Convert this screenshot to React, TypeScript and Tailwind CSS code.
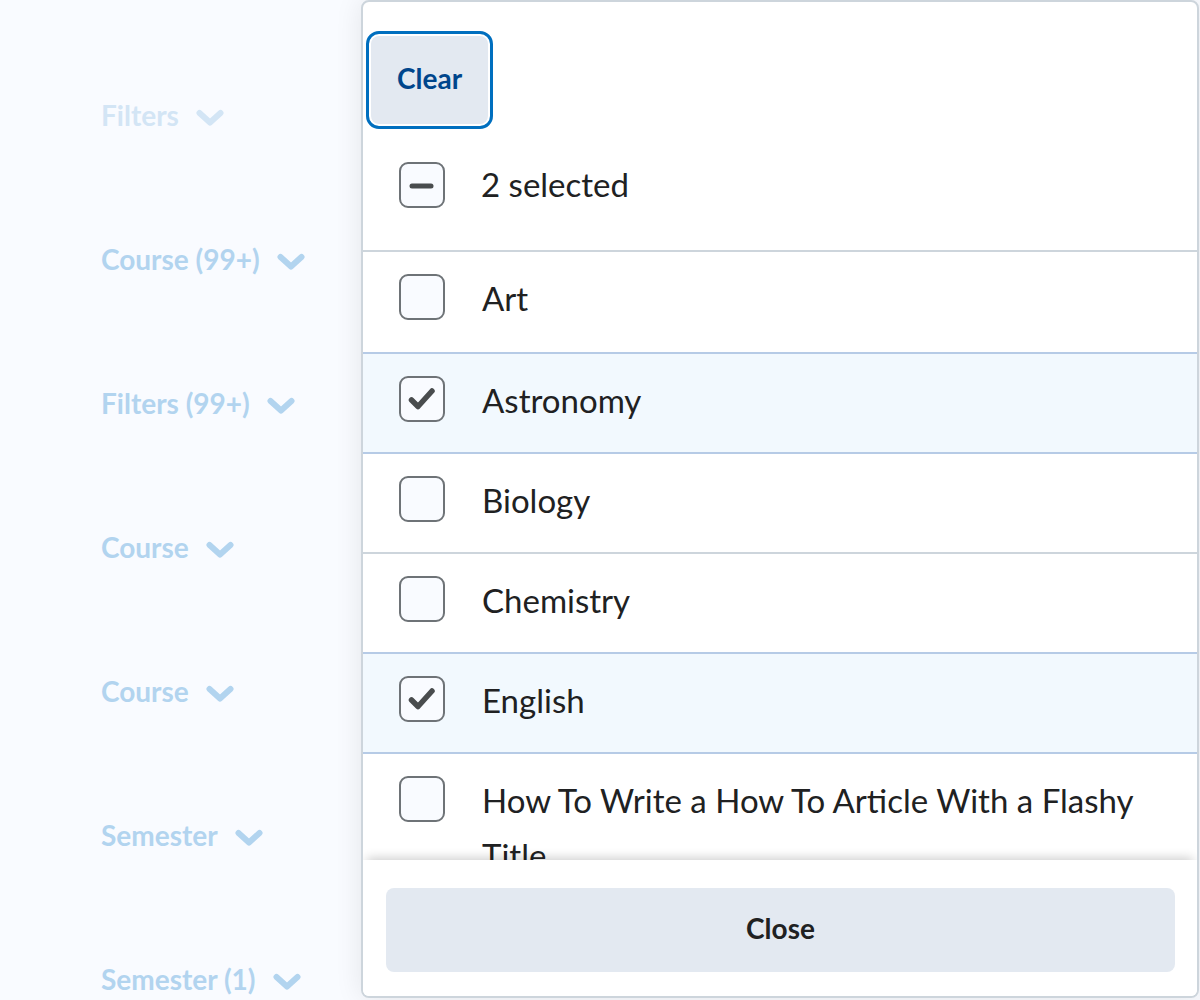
import type { ReactNode } from 'react';

type Course = { name: string; selected: boolean };

const filterLabels = [
  { label: 'Filters', faded: true },
  { label: 'Course (99+)', faded: false },
  { label: 'Filters (99+)', faded: false },
  { label: 'Course', faded: false },
  { label: 'Course', faded: false },
  { label: 'Semester', faded: false },
  { label: 'Semester (1)', faded: false },
];

const courses: Course[] = [
  { name: 'Art', selected: false },
  { name: 'Astronomy', selected: true },
  { name: 'Biology', selected: false },
  { name: 'Chemistry', selected: false },
  { name: 'English', selected: true },
  { name: 'How To Write a How To Article With a Flashy Title', selected: false },
  { name: 'Mathematics', selected: false },
];

function Chevron({ faded }: { faded: boolean }) {
  return (
    <svg
      width="28"
      height="18"
      viewBox="0 0 28 18"
      fill="none"
      className={faded ? 'text-[#d3e5f5] mt-[5px]' : 'text-[#b2d4ef] mt-[5px]'}
    >
      <path d="M3.5 4 L14 13.5 L24.5 4" stroke="currentColor" strokeWidth="6" strokeLinecap="round" strokeLinejoin="round" />
    </svg>
  );
}

function Checkbox({ children }: { children?: ReactNode }) {
  return (
    <div className="w-[46px] h-[46px] shrink-0 rounded-[9px] border-2 border-[#6e7377] bg-[#f9fbff] flex items-center justify-center">
      {children}
    </div>
  );
}

function CheckMark() {
  return (
    <svg width="42" height="42" viewBox="0 0 42 42" fill="none">
      <path d="M10.5 22 L17 28.5 L31 13" stroke="#494c4e" strokeWidth="5.5" strokeLinecap="round" strokeLinejoin="round" />
    </svg>
  );
}

function MinusMark() {
  return (
    <svg width="42" height="42" viewBox="0 0 42 42" fill="none">
      <path d="M11 22 L30 22" stroke="#494c4e" strokeWidth="5" strokeLinecap="round" />
    </svg>
  );
}

export default function App() {
  return (
    <div className="flex w-[1200px] h-[1000px] overflow-hidden bg-[#f9fbff] font-['Lato',sans-serif]">
      {/* filter openers behind the dropdown */}
      <div className="w-[361px] shrink-0 pl-[101px] pt-[95px] flex flex-col gap-[104px]">
        {filterLabels.map((f, i) => (
          <div key={i} className="flex items-center gap-[17px] h-[40px]">
            <span
              className={
                f.faded
                  ? 'text-[28px] leading-[40px] font-bold text-[#d3e5f5]'
                  : 'text-[28px] leading-[40px] font-bold text-[#b2d4ef]'
              }
            >
              {f.label}
            </span>
            <Chevron faded={f.faded} />
          </div>
        ))}
      </div>

      {/* dropdown panel */}
      <div className="w-[838px] h-[998px] shrink-0 flex flex-col bg-white border-2 border-[#cdd5dc] rounded-[8px] overflow-hidden shadow-[0_0_28px_rgba(0,0,0,0.09)]">
        <div className="pt-[34px] pl-[8px] flex">
          <button className="h-[88px] px-[26px] pb-[4px] rounded-[8px] bg-[#e3e9f1] text-[#00468c] text-[28px] font-bold outline-[3px] outline-solid outline-[#006fbf] outline-offset-[2px]">
            Clear
          </button>
        </div>
        <div className="h-[128px] shrink-0 flex items-center gap-[36px] pl-[36px] pb-[4px] border-b-2 border-[#cdd5dc]">
          <Checkbox>
            <MinusMark />
          </Checkbox>
          <span className="text-[33px] text-[#202122]">2 selected</span>
        </div>

        <div className="flex-1 overflow-hidden">
          {courses.map((c, i) => {
            const next = courses[i + 1];
            const blue = c.selected || (next && next.selected);
            return (
              <div
                key={c.name}
                className={[
                  'flex items-start gap-[37px] pl-[36px] pr-[40px] pt-[19px] border-b-2',
                  i === 0 ? 'min-h-[102px]' : 'min-h-[100px]',
                  c.selected ? 'bg-[#f2f9fe]' : 'bg-white',
                  blue ? 'border-[#b6cbe6]' : 'border-[#cdd5dc]',
                ].join(' ')}
              >
                <div className="mt-[3px]">
                  <Checkbox>{c.selected && <CheckMark />}</Checkbox>
                </div>
                <span className="text-[33px] leading-[55px] text-[#202122]">{c.name}</span>
              </div>
            );
          })}
        </div>

        <div className="h-[136px] shrink-0 relative z-10 bg-white pt-[28px] pl-[23px] pr-[22px] shadow-[0_-6px_10px_-4px_rgba(0,0,0,0.2)]">
          <button className="w-full h-[84px] pb-[4px] rounded-[8px] bg-[#e3e9f1] text-[28px] font-bold text-[#202122]">
            Close
          </button>
        </div>
      </div>
    </div>
  );
}
